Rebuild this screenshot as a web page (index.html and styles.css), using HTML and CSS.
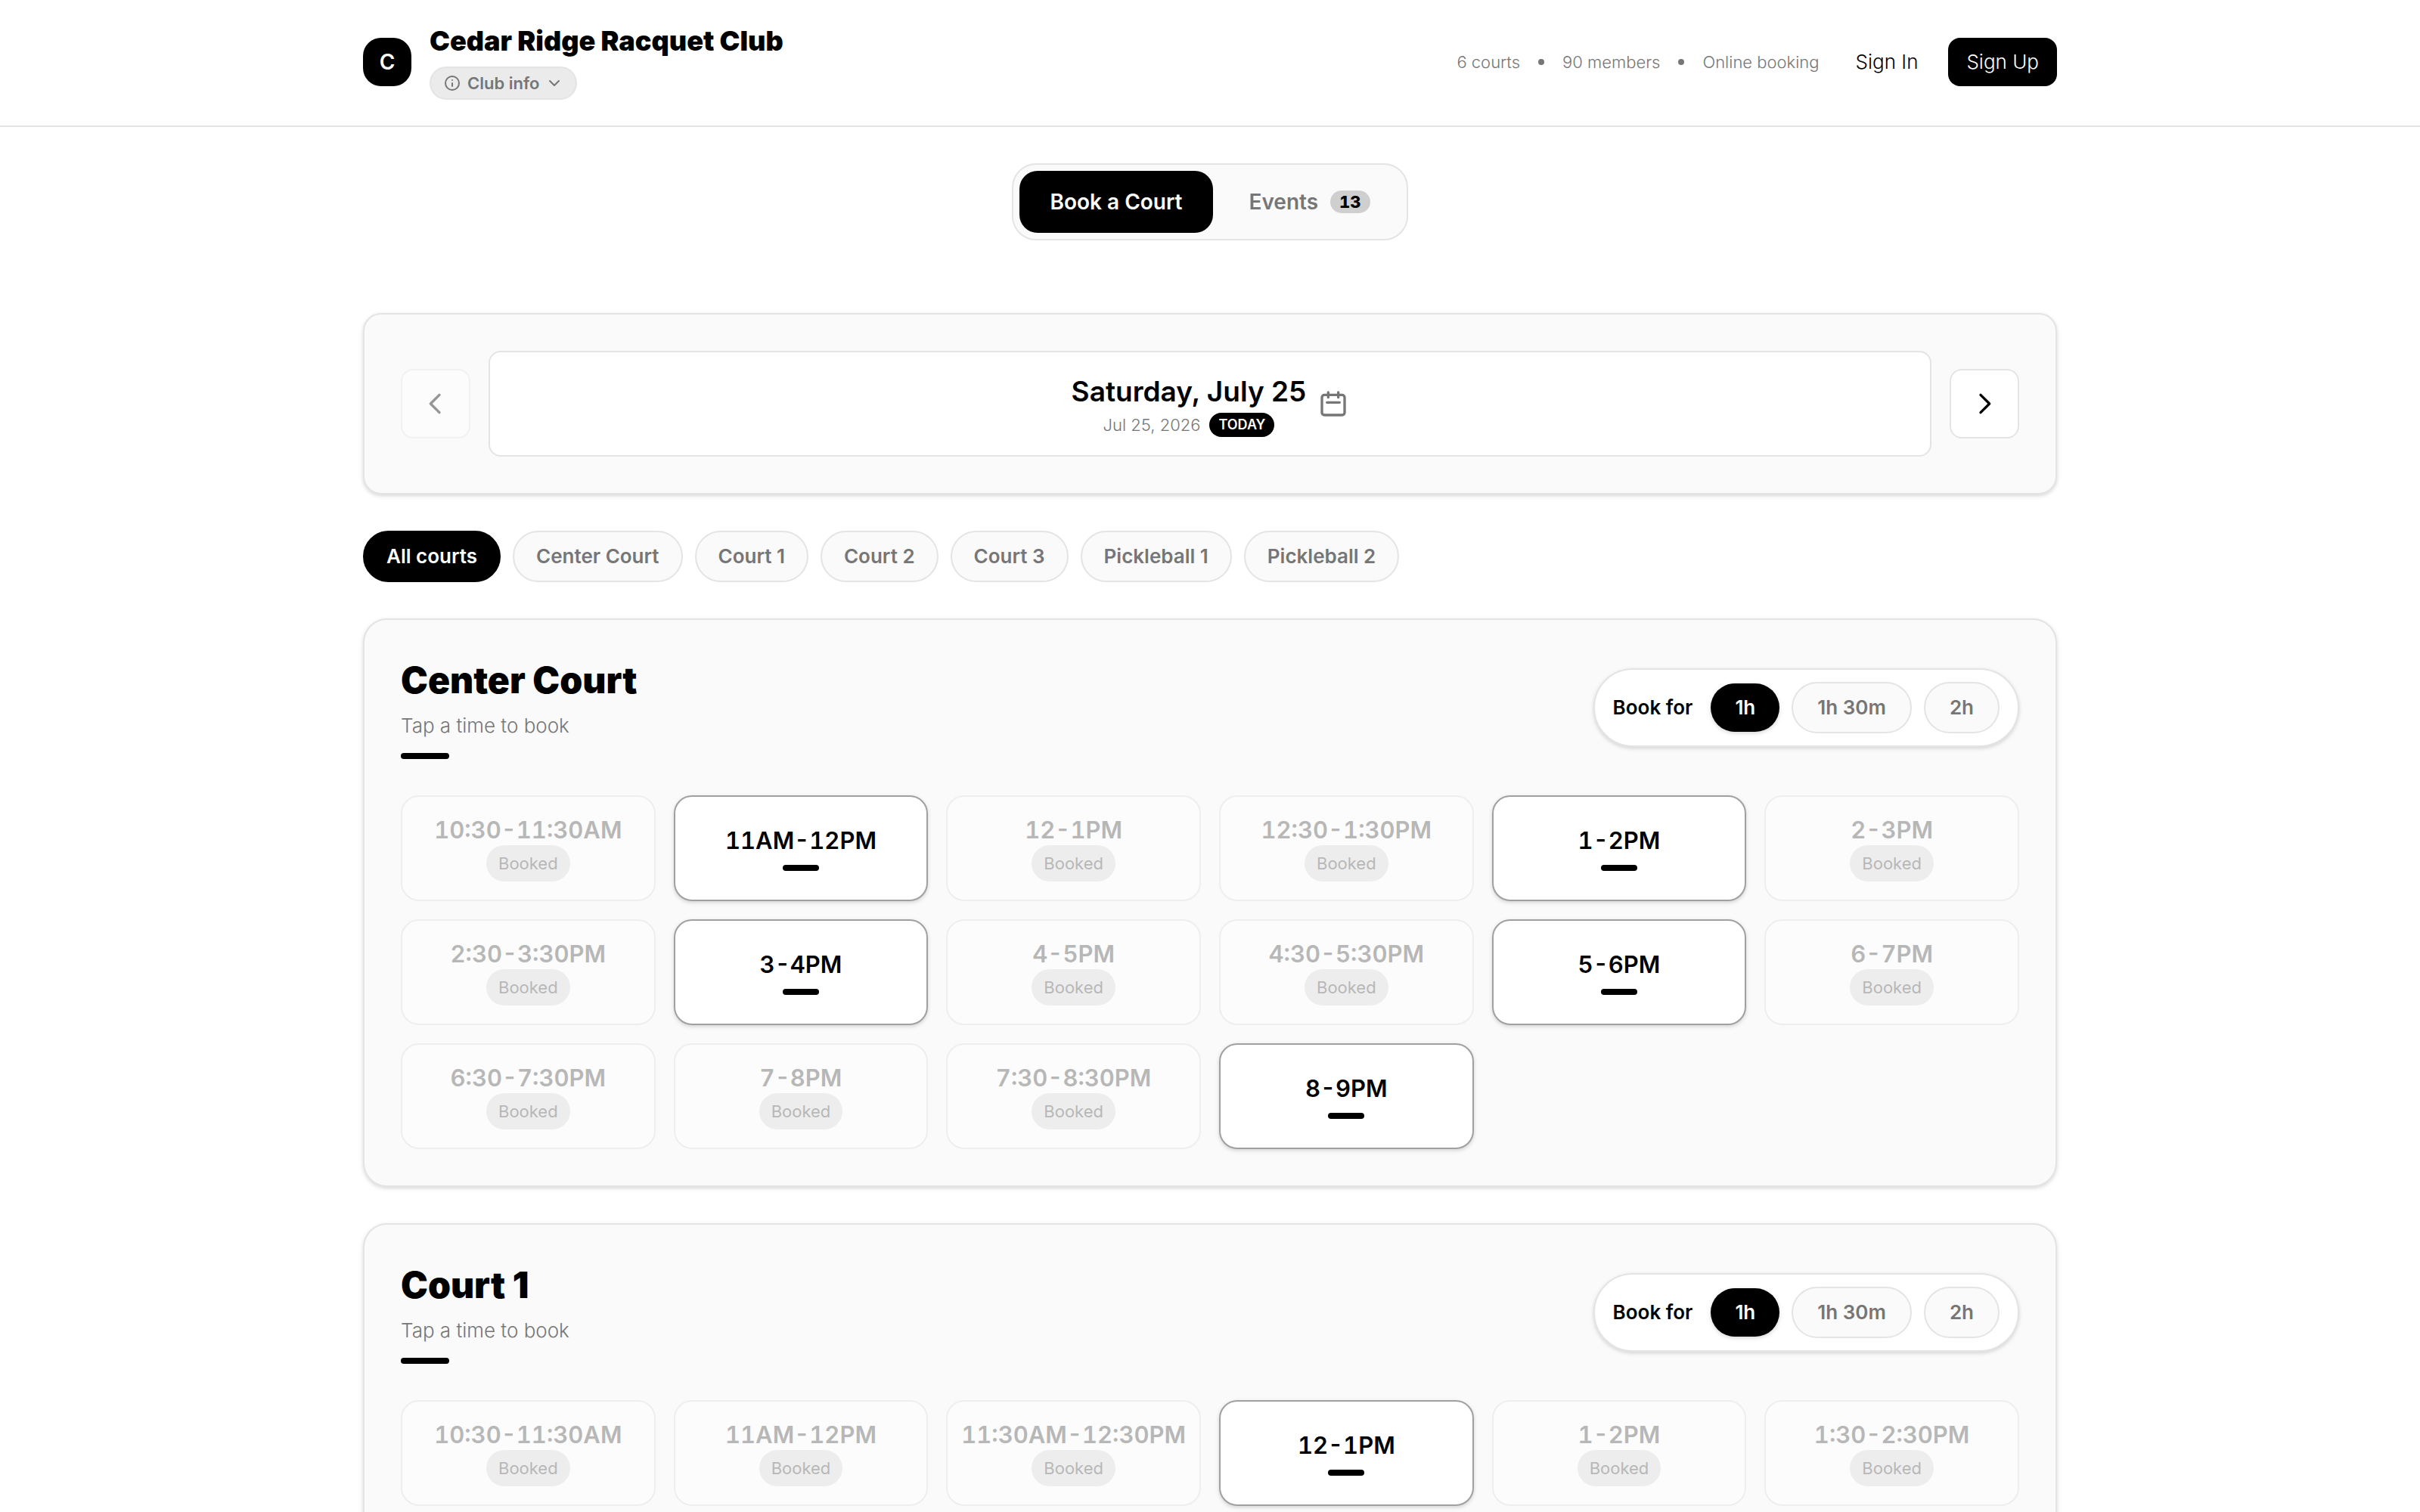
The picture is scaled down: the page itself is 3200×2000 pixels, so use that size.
FILE: index.html
```
<!DOCTYPE html>
<html lang="en">
<head>
  <meta charset="UTF-8" />
  <meta name="viewport" content="width=device-width, initial-scale=1" />
  <title>Cedar Ridge Racquet Club</title>
  <link rel="stylesheet" href="styles.css">
</head>
<body>
  <header class="site-header">
    <div class="container header-row">
      <div class="brand">
        <div class="logo">C</div>
        <div class="brand-text">
          <h1 class="club-name">Cedar Ridge Racquet Club</h1>
          <button type="button" class="club-info">
            <svg class="icon-small" viewBox="0 0 24 24"><circle cx="12" cy="12" r="9" /><path d="M12 16v-4M12 8h.01" /></svg>
            Club info
            <svg class="icon-small" viewBox="0 0 24 24"><path d="M6 9l6 6 6-6" /></svg>
          </button>
        </div>
      </div>
      <div class="header-side">
        <div class="stats">
          <span>6 courts</span>
          <span class="dot"></span>
          <span>90 members</span>
          <span class="dot"></span>
          <span>Online booking</span>
        </div>
        <nav class="auth">
          <a href="#" class="auth-link">Sign In</a>
          <a href="#" class="auth-link auth-primary">Sign Up</a>
        </nav>
      </div>
    </div>
  </header>

  <main class="container">
    <div class="tabs">
      <button type="button" class="tab active">Book a Court</button>
      <button type="button" class="tab">Events <span class="badge">13</span></button>
    </div>

    <section class="card date-card">
      <button type="button" class="nav-button" aria-label="Previous day" disabled>
        <svg class="icon" viewBox="0 0 24 24"><path d="M15 19l-7-7 7-7" /></svg>
      </button>
      <button type="button" class="date-picker">
        <span class="date-text">
          <span class="date-title">Saturday, July 25</span>
          <span class="date-sub">Jul 25, 2026 <span class="today">TODAY</span></span>
        </span>
        <svg class="icon muted" viewBox="0 0 24 24"><path d="M8 7V3m8 4V3m-9 8h10M5 21h14a2 2 0 002-2V7a2 2 0 00-2-2H5a2 2 0 00-2 2v12a2 2 0 002 2z" /></svg>
      </button>
      <button type="button" class="nav-button" aria-label="Next day">
        <svg class="icon" viewBox="0 0 24 24"><path d="M9 5l7 7-7 7" /></svg>
      </button>
    </section>

    <div class="filters">
      <button type="button" class="pill active">All courts</button>
      <button type="button" class="pill">Center Court</button>
      <button type="button" class="pill">Court 1</button>
      <button type="button" class="pill">Court 2</button>
      <button type="button" class="pill">Court 3</button>
      <button type="button" class="pill">Pickleball 1</button>
      <button type="button" class="pill">Pickleball 2</button>
    </div>

    <section class="card court">
      <div class="court-head">
        <div class="court-title">
          <h2>Center Court</h2>
          <p>Tap a time to book</p>
          <span class="accent"></span>
        </div>
        <div class="duration">
          <span class="duration-label">Book for</span>
          <button type="button" class="pill pill-wide active">1h</button>
          <button type="button" class="pill pill-wide">1h 30m</button>
          <button type="button" class="pill pill-wide">2h</button>
        </div>
      </div>
      <div class="slots">
        <button type="button" class="slot" disabled>10:30-11:30AM <span class="booked">Booked</span></button>
        <button type="button" class="slot open">11AM-12PM <span class="mark"></span></button>
        <button type="button" class="slot" disabled>12-1PM <span class="booked">Booked</span></button>
        <button type="button" class="slot" disabled>12:30-1:30PM <span class="booked">Booked</span></button>
        <button type="button" class="slot open">1-2PM <span class="mark"></span></button>
        <button type="button" class="slot" disabled>2-3PM <span class="booked">Booked</span></button>
        <button type="button" class="slot" disabled>2:30-3:30PM <span class="booked">Booked</span></button>
        <button type="button" class="slot open">3-4PM <span class="mark"></span></button>
        <button type="button" class="slot" disabled>4-5PM <span class="booked">Booked</span></button>
        <button type="button" class="slot" disabled>4:30-5:30PM <span class="booked">Booked</span></button>
        <button type="button" class="slot open">5-6PM <span class="mark"></span></button>
        <button type="button" class="slot" disabled>6-7PM <span class="booked">Booked</span></button>
        <button type="button" class="slot" disabled>6:30-7:30PM <span class="booked">Booked</span></button>
        <button type="button" class="slot" disabled>7-8PM <span class="booked">Booked</span></button>
        <button type="button" class="slot" disabled>7:30-8:30PM <span class="booked">Booked</span></button>
        <button type="button" class="slot open">8-9PM <span class="mark"></span></button>
      </div>
    </section>

    <section class="card court">
      <div class="court-head">
        <div class="court-title">
          <h2>Court 1</h2>
          <p>Tap a time to book</p>
          <span class="accent"></span>
        </div>
        <div class="duration">
          <span class="duration-label">Book for</span>
          <button type="button" class="pill pill-wide active">1h</button>
          <button type="button" class="pill pill-wide">1h 30m</button>
          <button type="button" class="pill pill-wide">2h</button>
        </div>
      </div>
      <div class="slots">
        <button type="button" class="slot" disabled>10:30-11:30AM <span class="booked">Booked</span></button>
        <button type="button" class="slot" disabled>11AM-12PM <span class="booked">Booked</span></button>
        <button type="button" class="slot" disabled>11:30AM-12:30PM <span class="booked">Booked</span></button>
        <button type="button" class="slot open">12-1PM <span class="mark"></span></button>
        <button type="button" class="slot" disabled>1-2PM <span class="booked">Booked</span></button>
        <button type="button" class="slot" disabled>1:30-2:30PM <span class="booked">Booked</span></button>
      </div>
    </section>
  </main>
</body>
</html>
```
FILE: styles.css
```
:root {
  --border: #e4e4e4;
  --surface: #fafafa;
  --muted: #767676;
  --shadow: 0 2px 6px rgba(0, 0, 0, 0.1), 0 2px 4px rgba(0, 0, 0, 0.06);
}

* {
  margin: 0;
  padding: 0;
  box-sizing: border-box;
}

body {
  background: #fff;
  color: #000;
  font-family: Inter, "Liberation Sans", sans-serif;
  font-size: 26px;
  font-weight: 300;
  line-height: 40px;
}

button {
  font: inherit;
  color: inherit;
  border: none;
  background: none;
  cursor: pointer;
  white-space: nowrap;
}

a {
  color: inherit;
  text-decoration: none;
}

svg {
  fill: none;
  stroke: currentColor;
  stroke-width: 2;
  stroke-linecap: round;
  stroke-linejoin: round;
}

.icon {
  width: 40px;
  height: 40px;
}

.icon-small {
  width: 24px;
  height: 24px;
}

.muted {
  color: var(--muted);
}

.container {
  width: 100%;
  max-width: 2240px;
  margin: 0 auto;
}

/* header */
.site-header {
  padding: 32px 0 34px;
  border-bottom: 2px solid var(--border);
}

.header-row,
.brand,
.header-side,
.stats,
.auth {
  display: flex;
  align-items: center;
}

.header-row {
  justify-content: space-between;
}

.brand {
  gap: 24px;
}

.logo {
  display: flex;
  align-items: center;
  justify-content: center;
  width: 64px;
  height: 64px;
  border-radius: 24px;
  background: #000;
  color: #fff;
  font-size: 28px;
  font-weight: 600;
}

.brand-text {
  display: flex;
  flex-direction: column;
  align-items: flex-start;
  gap: 12px;
}

.club-name {
  font-size: 36px;
  font-weight: 900;
  line-height: 44px;
}

.club-info {
  display: flex;
  align-items: center;
  gap: 8px;
  height: 44px;
  padding: 0 16px;
  border: 2px solid var(--border);
  border-radius: 22px;
  background: #ebebeb;
  color: var(--muted);
  font-size: 22px;
  font-weight: 600;
}

.header-side {
  gap: 24px;
}

.stats {
  gap: 24px;
  color: var(--muted);
  font-size: 22px;
}

.dot {
  width: 8px;
  height: 8px;
  border-radius: 4px;
  background: var(--muted);
}

.auth {
  gap: 16px;
}

.auth-link {
  padding: 12px 24px;
  border-radius: 16px;
}

.auth-primary {
  background: #000;
  color: #fff;
}

/* tabs */
.tabs {
  display: flex;
  width: fit-content;
  margin: 48px auto 96px;
  padding: 8px;
  gap: 8px;
  border: 2px solid var(--border);
  border-radius: 32px;
  background: var(--surface);
}

.tab {
  display: flex;
  align-items: center;
  gap: 16px;
  height: 82px;
  padding: 0 40px;
  border-radius: 24px;
  color: var(--muted);
  font-size: 28px;
  font-weight: 600;
}

.badge {
  padding: 0 12px;
  border-radius: 15px;
  background: #cfcfcf;
  color: #000;
  font-size: 22px;
  font-weight: 800;
  line-height: 30px;
  font-variant-numeric: tabular-nums;
}

.tab.active {
  background: #000;
  color: #fff;
}

/* date navigation */
.card {
  margin-bottom: 48px;
  padding: 48px;
  border: 2px solid var(--border);
  border-radius: 32px;
  background: var(--surface);
  box-shadow: var(--shadow);
}

.date-card {
  display: flex;
  align-items: center;
  gap: 24px;
  border-radius: 24px;
}

.nav-button {
  display: flex;
  align-items: center;
  justify-content: center;
  width: 92px;
  height: 92px;
  border: 2px solid var(--border);
  border-radius: 16px;
  background: #fff;
}

.nav-button:disabled {
  opacity: 0.4;
}

.date-picker {
  display: flex;
  flex: 1;
  align-items: center;
  justify-content: center;
  gap: 16px;
  padding: 24px;
  border: 2px solid var(--border);
  border-radius: 16px;
  background: #fff;
}

.date-text {
  display: flex;
  flex-direction: column;
  align-items: center;
}

.date-title {
  font-size: 37px;
  font-weight: 600;
  line-height: 56px;
}

.date-sub {
  display: flex;
  align-items: center;
  gap: 12px;
  color: var(--muted);
  font-size: 22px;
  line-height: 32px;
}

.today {
  padding: 0 12px;
  border-radius: 16px;
  background: #000;
  color: #fff;
  font-size: 18px;
  font-weight: 600;
}

/* filter and duration pills */
.filters {
  display: flex;
  flex-wrap: wrap;
  gap: 16px;
  margin-bottom: 48px;
}

.pill {
  padding: 12px 29px;
  border: 2px solid var(--border);
  border-radius: 34px;
  background: var(--surface);
  color: var(--muted);
  font-weight: 600;
}

.pill-wide {
  padding: 12px 32px;
}

.pill.active {
  border-color: #000;
  background: #000;
  color: #fff;
}

/* courts */
.court-head {
  display: flex;
  align-items: center;
  justify-content: space-between;
  margin-bottom: 48px;
}

.court-title h2 {
  font-size: 48px;
  font-weight: 900;
  line-height: 64px;
}

.court-title p {
  margin-top: 8px;
  color: var(--muted);
}

.accent {
  display: block;
  width: 64px;
  height: 8px;
  margin-top: 16px;
  border-radius: 4px;
  background: #000;
}

.duration {
  display: flex;
  align-items: center;
  gap: 16px;
  padding: 16px 24px;
  border: 2px solid var(--border);
  border-radius: 52px;
  background: #fff;
  box-shadow: var(--shadow);
}

.duration-label {
  margin-right: 8px;
  font-weight: 600;
}

.duration .pill.active {
  border: none;
  box-shadow: var(--shadow);
}

.slots {
  display: grid;
  grid-template-columns: repeat(6, 1fr);
  gap: 24px;
}

.slot {
  display: flex;
  flex-direction: column;
  align-items: center;
  justify-content: center;
  height: 140px;
  border: 2px solid var(--border);
  border-radius: 24px;
  background: #fff;
  color: var(--muted);
  font-size: 31px;
  font-weight: 600;
  font-variant-numeric: tabular-nums;
}

.slot:disabled {
  opacity: 0.5;
}

.slot.open {
  gap: 12px;
  border-color: #a0a0a0;
  color: #000;
  box-shadow: var(--shadow);
}

.mark {
  width: 48px;
  height: 8px;
  border-radius: 4px;
  background: #000;
}

.booked {
  padding: 0 16px;
  border-radius: 24px;
  background: #e2e2e2;
  font-size: 22px;
  font-weight: 400;
  line-height: 48px;
}
```
